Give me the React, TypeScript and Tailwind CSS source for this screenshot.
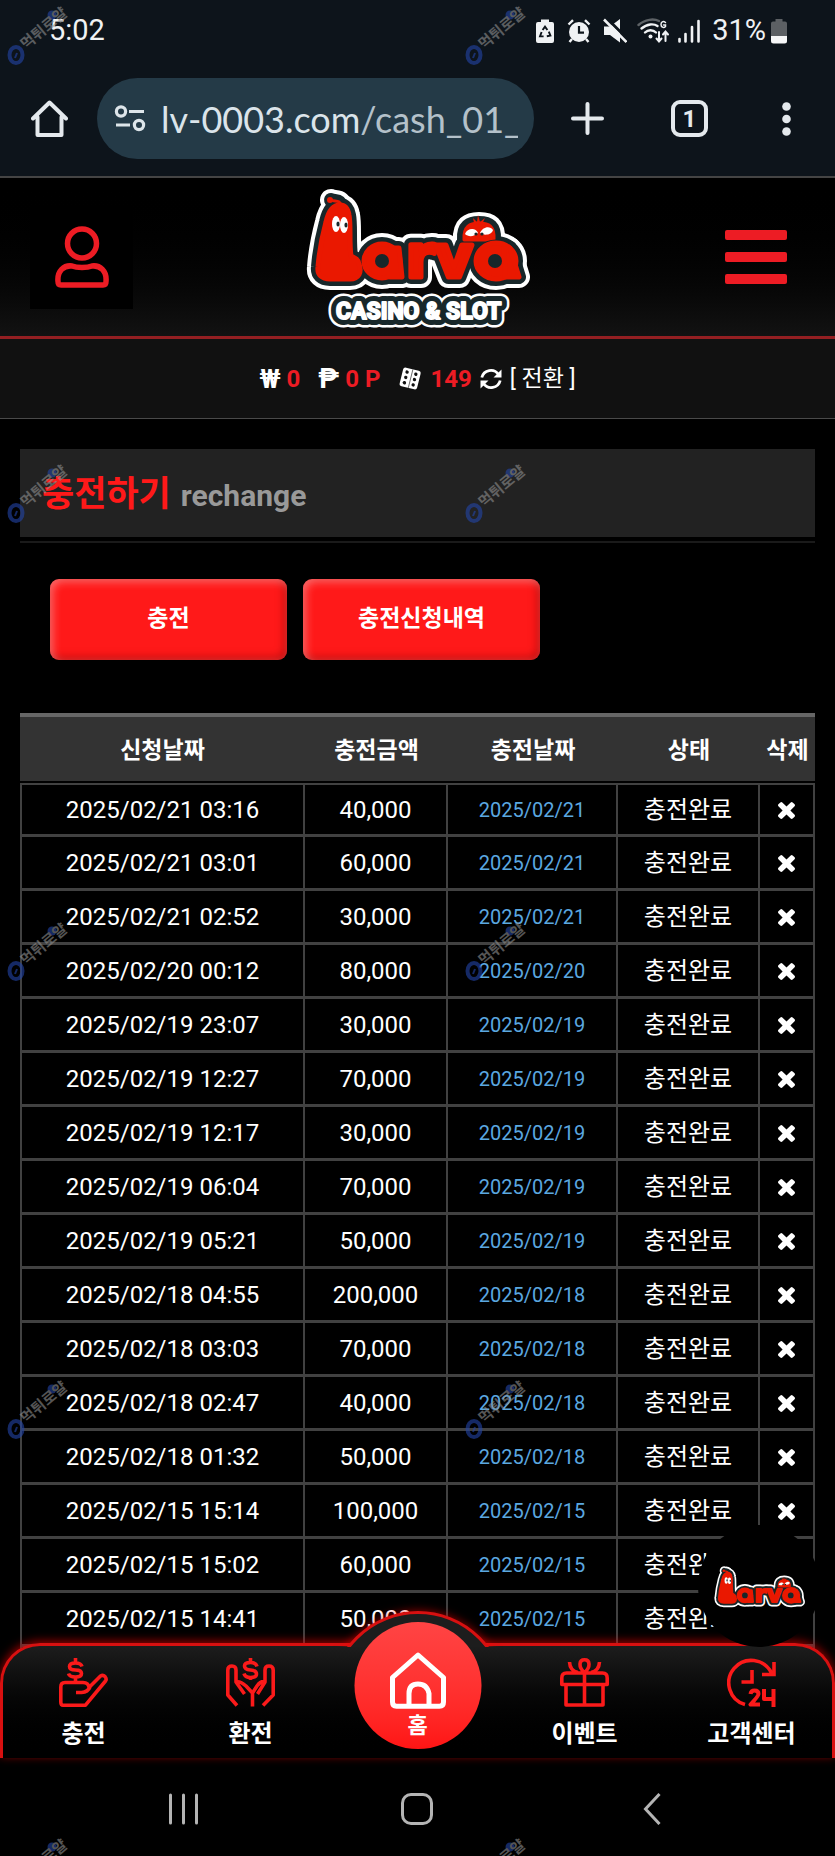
import type { ReactNode } from "react";

type Row = { requested: string; amount: string; charged: string };

const rows: Row[] = [
  { requested: "2025/02/21 03:16", amount: "40,000", charged: "2025/02/21" },
  { requested: "2025/02/21 03:01", amount: "60,000", charged: "2025/02/21" },
  { requested: "2025/02/21 02:52", amount: "30,000", charged: "2025/02/21" },
  { requested: "2025/02/20 00:12", amount: "80,000", charged: "2025/02/20" },
  { requested: "2025/02/19 23:07", amount: "30,000", charged: "2025/02/19" },
  { requested: "2025/02/19 12:27", amount: "70,000", charged: "2025/02/19" },
  { requested: "2025/02/19 12:17", amount: "30,000", charged: "2025/02/19" },
  { requested: "2025/02/19 06:04", amount: "70,000", charged: "2025/02/19" },
  { requested: "2025/02/19 05:21", amount: "50,000", charged: "2025/02/19" },
  { requested: "2025/02/18 04:55", amount: "200,000", charged: "2025/02/18" },
  { requested: "2025/02/18 03:03", amount: "70,000", charged: "2025/02/18" },
  { requested: "2025/02/18 02:47", amount: "40,000", charged: "2025/02/18" },
  { requested: "2025/02/18 01:32", amount: "50,000", charged: "2025/02/18" },
  { requested: "2025/02/15 15:14", amount: "100,000", charged: "2025/02/15" },
  { requested: "2025/02/15 15:02", amount: "60,000", charged: "2025/02/15" },
  { requested: "2025/02/15 14:41", amount: "50,000", charged: "2025/02/15" },
];

/* ---------- logo ---------- */

function LogoShapes() {
  return (
    <>
      <path d="M50 33C42 33 38 41 36 50C32 65 29 82 28 95C27 103 32 107 40 107H60C69 107 72 100 69 92C68 87 65 86 61 84C59 70 61 52 59 43C58 37 55 33 50 33Z" />
      <ellipse cx="92" cy="89" rx="18" ry="17" />
      <path d="M100 76h9l3 29h-12z" />
      <ellipse cx="206" cy="89" rx="20" ry="18" />
      <path d="M214 76h6l9 29h-14z" />
      <text x="116" y="105" fontSize="58">r</text>
      <text x="145" y="105" fontSize="58">v</text>
    </>
  );
}

function LogoHeads() {
  return (
    <>
      <path d="M51 34C50 27 45 30 41 28" fill="none" />
      <path d="M174 68C173 54 180 51 189 51C199 51 205 54 204 68Z" />
    </>
  );
}

function LarvaLogo({ subtitle, className }: { subtitle?: boolean; className: string }) {
  return (
    <svg
      viewBox={subtitle ? "16 14 224 142" : "16 14 224 106"}
      className={className}
      role="img"
      aria-label="Larva Casino & Slot"
      fontFamily="'DejaVu Sans', sans-serif"
      fontWeight="700"
      strokeLinejoin="round"
      strokeLinecap="round"
    >
      <g fill="#fff" stroke="#fff" strokeWidth="22">
        <LogoShapes />
        <LogoHeads />
      </g>
      {subtitle && (
        <text x="46" y="147" fontSize="23" fontFamily="Roboto, sans-serif" fill="#fff" stroke="#fff" strokeWidth="17" aria-hidden="true">
          CASINO &amp; SLOT
        </text>
      )}
      <g fill="#18272a" stroke="#18272a" strokeWidth="14">
        <LogoShapes />
        <LogoHeads />
      </g>
      <g fill="#ea1800" stroke="#ea1800" strokeWidth="3">
        <LogoHeads />
      </g>
      <g fill="#18272a" stroke="#18272a" strokeWidth="9">
        <ellipse cx="206" cy="89" rx="18" ry="17" />
      </g>
      <g fill="#ea1800" stroke="#ea1800" strokeWidth="5">
        <LogoShapes />
      </g>
      <circle cx="92" cy="89" r="7" fill="#18272a" />
      <circle cx="205" cy="89" r="7" fill="#18272a" />
      <circle cx="40" cy="28" r="3" fill="#ea1800" />
      <path d="M184 51l-1-5 4 4 1-7 2 7 5-4-3 6z" fill="#ea1800" />
      <g fill="#fff">
        <ellipse cx="46" cy="52" rx="4" ry="8" />
        <ellipse cx="54" cy="53" rx="4" ry="8" />
        <path d="M175 62C177 56 186 55 188 61C184 65 178 65 175 62Z" />
        <path d="M190 61C192 55 200 53 203 58C202 63 194 64 190 61Z" />
      </g>
      <g fill="#18272a">
        <ellipse cx="48" cy="52" rx="1.6" ry="2.6" />
        <ellipse cx="56" cy="53" rx="1.6" ry="2.6" />
        <circle cx="186" cy="62" r="1.6" />
        <circle cx="192" cy="62" r="1.6" />
      </g>
      {subtitle && (
        <>
          <text x="46" y="147" fontSize="23" fontFamily="Roboto, sans-serif" fill="#18272a" stroke="#18272a" strokeWidth="12" aria-hidden="true">
            CASINO &amp; SLOT
          </text>
          <text x="46" y="147" fontSize="23" fontFamily="Roboto, sans-serif" fill="#fff" stroke="#fff" strokeWidth="2">
            CASINO &amp; SLOT
          </text>
        </>
      )}
    </svg>
  );
}

/* ---------- phone status bar ---------- */

function StatusBar() {
  return (
    <div className="flex h-[61px] shrink-0 items-center justify-between pl-[49px] pr-[48px] text-[29px] text-[#f0f2f4]">
      <span>5:02</span>
      <div className="flex items-center">
        <svg viewBox="0 0 18 26" className="mr-[13px] h-[26px] w-[18px]">
          <path d="M5 1.5h8v2.5h3a2 2 0 0 1 2 2v17a2 2 0 0 1-2 2H2a2 2 0 0 1-2-2V6a2 2 0 0 1 2-2h3z" fill="#f0f2f4" />
          <path d="M6.6 12L9 8.6l2.4 3.4M12.8 13.6l1.6 4-3.6.6M7.6 18.4H4l1.6-4.4" fill="none" stroke="#0d141b" strokeWidth="1.9" />
        </svg>
        <svg viewBox="0 0 24 26" className="mr-[12px] h-[26px] w-[24px]">
          <path d="M1.5 6.500L6 2.200M22.500 6.500L18 2.200" stroke="#f0f2f4" strokeWidth="2.400" />
          <path d="M5 21l-2.500 3M19 21l2.500 3" stroke="#f0f2f4" strokeWidth="2.400" />
          <circle cx="12" cy="14" r="10" fill="#f0f2f4" />
          <path d="M12 8v6.600h5" fill="none" stroke="#0d141b" strokeWidth="2.200" />
        </svg>
        <svg viewBox="0 0 24 26" className="mr-[10px] h-[26px] w-[24px]">
          <path d="M1 8.500h6L17 1v23.500L7 17H1z" fill="#f0f2f4" />
          <path d="M2.500 -1l24 24" stroke="#0d141b" strokeWidth="3" />
          <path d="M1 1.500l22.500 22.500" stroke="#f0f2f4" strokeWidth="2.600" />
        </svg>
        <svg viewBox="0 0 33 26" className="mr-[8px] h-[26px] w-[33px]" fill="none" strokeLinecap="round">
          <path d="M1.500 7C8 1 17 .5 22 3" stroke="#5d6266" strokeWidth="2.400" />
          <path d="M4.500 10.500C10 5.500 17 5.500 20.500 8M8 14.500C11 11.500 16 11.500 19 14.500" stroke="#f0f2f4" strokeWidth="2.400" />
          <circle cx="13.500" cy="18.500" r="2" fill="#f0f2f4" />
          <path d="M28.500 4.500C26 2.500 24 4 24 6.500S26.500 10.500 28.500 8.500V7H26.500" stroke="#f0f2f4" strokeWidth="1.500" />
          <path d="M22 14v9M19.500 20.500l2.500 3 2.500-3M28.500 23v-9M26 16.500l2.500-3 2.500 3" stroke="#f0f2f4" strokeWidth="2" />
        </svg>
        <svg viewBox="0 0 22 26" className="mr-[12px] h-[26px] w-[22px]" stroke="#f0f2f4" strokeWidth="2.600" strokeLinecap="round">
          <path d="M1.500 21v2.500M7.500 16v7.500M14 9v14.500M20.500 3v20.500" />
        </svg>
        <span className="mr-[5px]">31%</span>
        <svg viewBox="0 0 16 26" className="h-[26px] w-[16px]">
          <path d="M4.500 1h7v2.500h2.500a2 2 0 0 1 2 2V18H0V5.500a2 2 0 0 1 2-2h2.500z" fill="#5c6064" />
          <path d="M0 18h16v5a2.500 2.500 0 0 1-2.500 2.500h-11A2.500 2.500 0 0 1 0 23z" fill="#f6f7f8" />
        </svg>
      </div>
    </div>
  );
}

function BrowserBar() {
  return (
    <div className="flex h-[117px] shrink-0 items-center border-b-2 border-[#444444] pl-[31px] pr-[44px]">
      <button aria-label="홈페이지" className="mr-[29px]">
        <svg viewBox="0 0 37 37" className="h-[37px] w-[37px]" fill="none" stroke="#e4e9ed" strokeWidth="4" strokeLinejoin="round" strokeLinecap="round">
          <path d="M2 18.500L18.500 2.500L35 18.500M6.500 17V35H30.500V17" />
        </svg>
      </button>
      <button className="flex h-[81px] min-w-0 flex-1 items-center rounded-full bg-[#243a47] pl-[17px] pr-[16px]">
        <svg viewBox="0 0 32 27" className="mr-[15px] h-[27px] w-[32px] shrink-0" fill="none" stroke="#dde5ea" strokeWidth="3.200">
          <circle cx="7" cy="6.500" r="4.600" />
          <circle cx="25" cy="20" r="4.600" />
          <path d="M15 6.500h15M2 20h14" />
        </svg>
        <span className="flex-1 overflow-hidden whitespace-nowrap text-left font-['Lato',sans-serif] text-[36px] leading-[48px] text-[#b4c1ca]">
          <span className="text-[#dbe4ea]">lv-0003.com</span>/cash_01_1
        </span>
      </button>
      <button aria-label="새 탭" className="ml-[37px]">
        <svg viewBox="0 0 33 33" className="h-[33px] w-[33px]" stroke="#e4e9ed" strokeWidth="4" strokeLinecap="round">
          <path d="M16.500 2v29M2 16.500h29" />
        </svg>
      </button>
      <button className="ml-[67px] flex h-[37px] w-[37px] items-center justify-center rounded-[9px] border-4 border-[#e4e9ed] text-[24px] font-bold text-[#e4e9ed]">
        1
      </button>
      <button aria-label="메뉴 더보기" className="ml-[74px]">
        <svg viewBox="0 0 9 34" className="h-[34px] w-[9px]" fill="#e4e9ed">
          <circle cx="4.500" cy="4.500" r="4.300" />
          <circle cx="4.500" cy="17" r="4.300" />
          <circle cx="4.500" cy="29.500" r="4.300" />
        </svg>
      </button>
    </div>
  );
}

/* ---------- site header ---------- */

function SiteHeader() {
  return (
    <header className="grid h-[161px] shrink-0 grid-cols-[1fr_auto_1fr] items-center border-b-3 border-[#941f22] bg-linear-to-b from-black to-[#121212]">
      <button aria-label="내 정보" className="ml-[30px] flex h-[103px] w-[103px] items-center justify-center bg-black">
        <svg viewBox="0 0 54 62" className="h-[62px] w-[54px]" fill="none" stroke="#ed1c24" strokeWidth="5.500" strokeLinejoin="round">
          <circle cx="27" cy="17.500" r="14.500" />
          <path d="M6 59C4 59 3 58 3 55.500C2 45 9 39 17 40C22 42 32 42 37 40C45 39 52 45 51 55.500C51 58 50 59 48 59Z" />
        </svg>
      </button>
      <a href="#home">
        <LarvaLogo subtitle className="h-[142px] w-[224px]" />
      </a>
      <button aria-label="메뉴" className="mr-[48px] flex w-[62px] flex-col gap-3 justify-self-end">
        <span className="h-[10px] rounded-[2px] bg-[#ed1c24]" />
        <span className="h-[10px] rounded-[2px] bg-[#ed1c24]" />
        <span className="h-[10px] rounded-[2px] bg-[#ed1c24]" />
      </button>
    </header>
  );
}

function BalanceBar() {
  return (
    <div className="flex h-[80px] shrink-0 items-center justify-center border-b border-[#4a4a4a] bg-[#111111] text-[24px] leading-[32px] font-bold text-[#ed1c24]">
      <span className="mr-[6px] text-[26px] text-white">₩</span>
      <span>0</span>
      <span className="ml-[18px] mr-[6px] text-[28px] text-white">₱</span>
      <span>0 P</span>
      <svg viewBox="0 0 24 24" className="ml-[18px] mr-2 h-[24px] w-[24px]">
        <g transform="rotate(14 12 12)">
          <rect x="3" y="2" width="18" height="19" rx="2.500" fill="#fff" />
          <path d="M12.500 2v19" stroke="#555" strokeWidth=".8" />
          <g fill="#111">
            <circle cx="7.500" cy="6" r="1.700" />
            <circle cx="7.500" cy="11.500" r="1.700" />
            <circle cx="7.500" cy="17" r="1.700" />
            <circle cx="16.500" cy="6" r="1.700" />
            <circle cx="16.500" cy="11.500" r="1.700" />
            <circle cx="16.500" cy="17" r="1.700" />
          </g>
        </g>
      </svg>
      <span>149</span>
      <button className="ml-2 flex items-center gap-2 font-normal text-white">
        <svg viewBox="0 0 22 22" className="h-[22px] w-[22px]">
          <path d="M1.800 9.500A9.300 9.300 0 0 1 18.500 6.500M20.200 12.500A9.300 9.300 0 0 1 3.500 15.500" fill="none" stroke="#fff" strokeWidth="2.800" />
          <path d="M21.500 1.500v8h-8zM.5 20.500v-8h8z" fill="#fff" />
        </svg>
        <span className="text-[23px]">[ 전환 ]</span>
      </button>
    </div>
  );
}

/* ---------- history ---------- */

function DeleteIcon() {
  return (
    <svg viewBox="302 366 1188 1188" className="mx-auto h-[17px] w-[17px]" fill="#fff">
      <path d="M1490 1322q0 40-28 68l-136 136q-28 28-68 28t-68-28l-294-294-294 294q-28 28-68 28t-68-28l-136-136q-28-28-28-68t28-68l294-294-294-294q-28-28-28-68t28-68l136-136q28-28 68-28t68 28l294 294 294-294q28-28 68-28t68 28l136 136q28 28 28 68t-28 68l-294 294 294 294q28 28 28 68z" />
    </svg>
  );
}

const cell = "h-[54px] border-b-3 border-r-2 border-[#414141] px-0 pb-0 pt-px";
const head = "border-t-4 border-b-2 border-t-[#666666] border-b-black bg-[#333333] px-0 pb-0 pt-1";

function HistoryTable() {
  return (
    <table className="mt-[53px] w-full table-fixed border-separate border-spacing-0 text-center text-[24px] leading-[32px]">
      <thead>
        <tr className="text-[23px]">
          <th className={`${head} h-[70px]`}>신청날짜</th>
          <th className={`${head} w-[143px]`}>충전금액</th>
          <th className={`${head} w-[170px]`}>충전날짜</th>
          <th className={`${head} w-[142px]`}>상태</th>
          <th className={`${head} w-[55px]`}>삭제</th>
        </tr>
      </thead>
      <tbody className="[&>tr:first-child>td]:border-t-2">
        {rows.map((r) => (
          <tr key={r.requested}>
            <td className={`${cell} border-l-2`}>{r.requested}</td>
            <td className={cell}>{r.amount}</td>
            <td className={`${cell} text-[20px] text-[#5ba8e0]`}>{r.charged}</td>
            <td className={cell}>충전완료</td>
            <td className={cell}>
              <button aria-label="삭제" className="block w-full">
                <DeleteIcon />
              </button>
            </td>
          </tr>
        ))}
        <tr>
          <td className={`${cell} border-l-2`} />
          <td className={cell} />
          <td className={cell} />
          <td className={cell} />
          <td className={cell} />
        </tr>
      </tbody>
    </table>
  );
}

function RedButton({ children }: { children: ReactNode }) {
  return (
    <button className="h-[81px] w-[237px] rounded-[9px] bg-[#ff1919] text-[23px] font-bold text-white shadow-[inset_3px_3px_8px_rgba(255,255,255,0.35),inset_-3px_-3px_8px_rgba(120,0,0,0.45)]">
      {children}
    </button>
  );
}

/* ---------- bottom navigation ---------- */

function NavItem({ label, children }: { label: string; children: ReactNode }) {
  return (
    <a href="#nav" className="flex flex-col items-center gap-[10px] pt-3 text-[24px] leading-[34px] font-bold text-white">
      <svg viewBox="0 0 49 49" className="h-[49px] w-[49px]" fill="none" stroke="#fb1a1a" strokeWidth="3.600" strokeLinejoin="round">
        {children}
      </svg>
      {label}
    </a>
  );
}

function BottomNav() {
  return (
    <nav className="relative h-[115px]">
      <div className="absolute inset-0 rounded-t-[40px] border-x-3 border-t-3 border-[#d81010] bg-linear-to-b from-[#1d1d1d] to-black shadow-[0_-2px_10px_rgba(255,0,0,0.6)]" />
      <div className="absolute -top-[46px] left-1/2 h-[50px] w-[240px] -translate-x-1/2 overflow-hidden">
        <div className="mx-auto mt-[14px] h-[176px] w-[176px] rounded-full border-3 border-[#d81010] bg-[#1d1d1d] shadow-[0_0_10px_rgba(255,0,0,0.6)]" />
      </div>
      <div className="relative grid h-full grid-cols-5 pt-[3px]">
        <NavItem label="충전">
          <path d="M4 47.200Q1.800 47.200 1.800 44V29Q1.800 24.500 6 24.500H24Q29.500 24.500 30 29.500L41.500 18Q44 16.500 46 18.500Q48 21 46.500 23L26.500 47.200ZM17 34.500H22.500Q29 34 31 29M16.500 20v5" />
          <path d="M23 8.500Q22 5 16.500 5Q10.500 5 10.500 8.500T16.500 12T22.500 15.500T16.500 19Q10.500 19 9.500 15.500M16.500 0V5" />
        </NavItem>
        <NavItem label="환전">
          <path d="M11 47.500L1.800 37V12Q1.800 8 6 8Q10 8 10 12V24L18.500 36M10 24Q14 22.500 20 28L26.500 35V48.500M37 47.500L47.200 37V12Q47.200 8 43 8Q39 8 39 12V24L31.500 36M39 24Q35 22.500 31 28L26.500 35" />
          <path d="M31 8.500Q30 4.500 24.500 4.500Q18.500 4.500 18.500 8T24.500 12T30.500 16T24.500 19.500Q19 19.500 18 15.500M24.500 0V4.500M24.500 19V22" />
        </NavItem>
        <div />
        <NavItem label="이벤트">
          <path d="M6 26.500V47H43V26.500M24.500 14V47M1.800 26.500V20Q1.800 15 6.500 15H42.500Q47.200 15 47.200 20V26.500ZM24.500 14.500C18 9 19 1.800 24.500 1.800S31 9 24.500 14.500ZM9.500 4Q10 13 18 14.500M39.500 4Q39 13 31 14.500" />
        </NavItem>
        <NavItem label="고객센터">
          <path d="M18 46.500A22.500 22.500 0 1 1 44.500 15M47 4V16.500H35M25 12V24H14.500" strokeLinejoin="miter" />
          <path d="M23.500 36Q24 32.500 27.500 32.500Q31.500 32.500 31.500 36Q31.500 38 23.500 46.500H33M37 31V41H47M46.500 31V49" strokeWidth="4" />
        </NavItem>
      </div>
      <a
        href="#home"
        className="absolute -top-[21px] left-1/2 flex h-[127px] w-[127px] -translate-x-1/2 flex-col items-center rounded-full bg-linear-to-b from-[#ff4444] to-[#ff1414] pt-[30px] text-[22px] leading-[34px] font-bold text-white"
      >
        <svg viewBox="0 0 57 57" className="h-[57px] w-[57px]" fill="none" stroke="#fff" strokeWidth="5" strokeLinejoin="round">
          <path d="M28.500 3L54 25.500V50Q54 54.300 50 54.300H7Q3 54.300 3 50V25.500ZM19.500 54V41.500Q19.500 32 28.500 32T39.500 41.500V54" />
        </svg>
        홈
      </a>
    </nav>
  );
}

function SystemNav() {
  return (
    <div className="grid h-[98px] grid-cols-3 items-center justify-items-center bg-black px-[66px] pt-[3px]">
      <button aria-label="최근 앱">
        <svg viewBox="0 0 31 32" className="h-[32px] w-[31px]" stroke="#b4b4b4" strokeWidth="3" strokeLinecap="round">
          <path d="M2.500 2v28M15.500 2v28M28.500 2v28" />
        </svg>
      </button>
      <button aria-label="홈 화면" className="h-[32px] w-[32px] rounded-[10px] border-3 border-[#b4b4b4]" />
      <button aria-label="뒤로">
        <svg viewBox="0 0 18 32" className="h-[32px] w-[18px]" fill="none" stroke="#b4b4b4" strokeWidth="3">
          <path d="M16.500 1L2.500 16L16.500 31" />
        </svg>
      </button>
    </div>
  );
}

/* ---------- repeating stamp ---------- */

function Stamp() {
  return (
    <svg viewBox="0 0 64 64" className="h-[64px] w-[64px]" opacity="0.6">
      <circle cx="48" cy="11" r="4.500" fill="#2345a8" />
      <ellipse cx="12" cy="51" rx="6.500" ry="8" fill="none" stroke="#2345a8" strokeWidth="4" />
      <path d="M11 54l2-5" stroke="#2345a8" strokeWidth="2" />
      <text x="22" y="46" fontSize="15" fontWeight="700" fontFamily="'Noto Sans CJK KR', sans-serif" fill="#8e8e8e" transform="rotate(-40 22 46)">
        먹튀로얄
      </text>
    </svg>
  );
}

function Stamps() {
  return (
    <div className="pointer-events-none absolute left-[4px] top-[4px] z-30 grid auto-rows-[458px] grid-cols-[458px_458px]" aria-hidden="true">
      {Array.from({ length: 10 }, (_, i) => (
        <Stamp key={i} />
      ))}
    </div>
  );
}

export default function App() {
  return (
    <div className="relative flex h-screen flex-col overflow-hidden bg-black font-['Roboto','Noto_Sans_CJK_KR',sans-serif] text-white">
      <div className="shrink-0 bg-[#0d141b]">
        <StatusBar />
        <BrowserBar />
      </div>
      <SiteHeader />
      <BalanceBar />
      <main className="min-h-0 flex-1 overflow-hidden px-5 pt-[30px]">
        <div className="border-b-2 border-[#1a1a1a] pb-1">
          <h1 className="flex h-[88px] items-baseline gap-[10px] bg-[#222222] pl-[22px] pt-[20px] text-[35px] leading-[52px] font-bold text-[#ff1919]">
            충전하기
            <small className="text-[30px] text-[#999999]">rechange</small>
          </h1>
        </div>
        <div className="flex gap-4 pl-[30px] pt-[36px]">
          <RedButton>충전</RedButton>
          <RedButton>충전신청내역</RedButton>
        </div>
        <HistoryTable />
      </main>
      <div className="absolute inset-x-0 bottom-0 z-10">
        <BottomNav />
        <SystemNav />
      </div>
      <a href="#larva" aria-label="Larva" className="absolute bottom-[209px] right-[15px] z-20 flex h-[122px] w-[122px] items-center justify-center rounded-full bg-black">
        <LarvaLogo className="h-[43px] w-[91px]" />
      </a>
      <Stamps />
    </div>
  );
}
